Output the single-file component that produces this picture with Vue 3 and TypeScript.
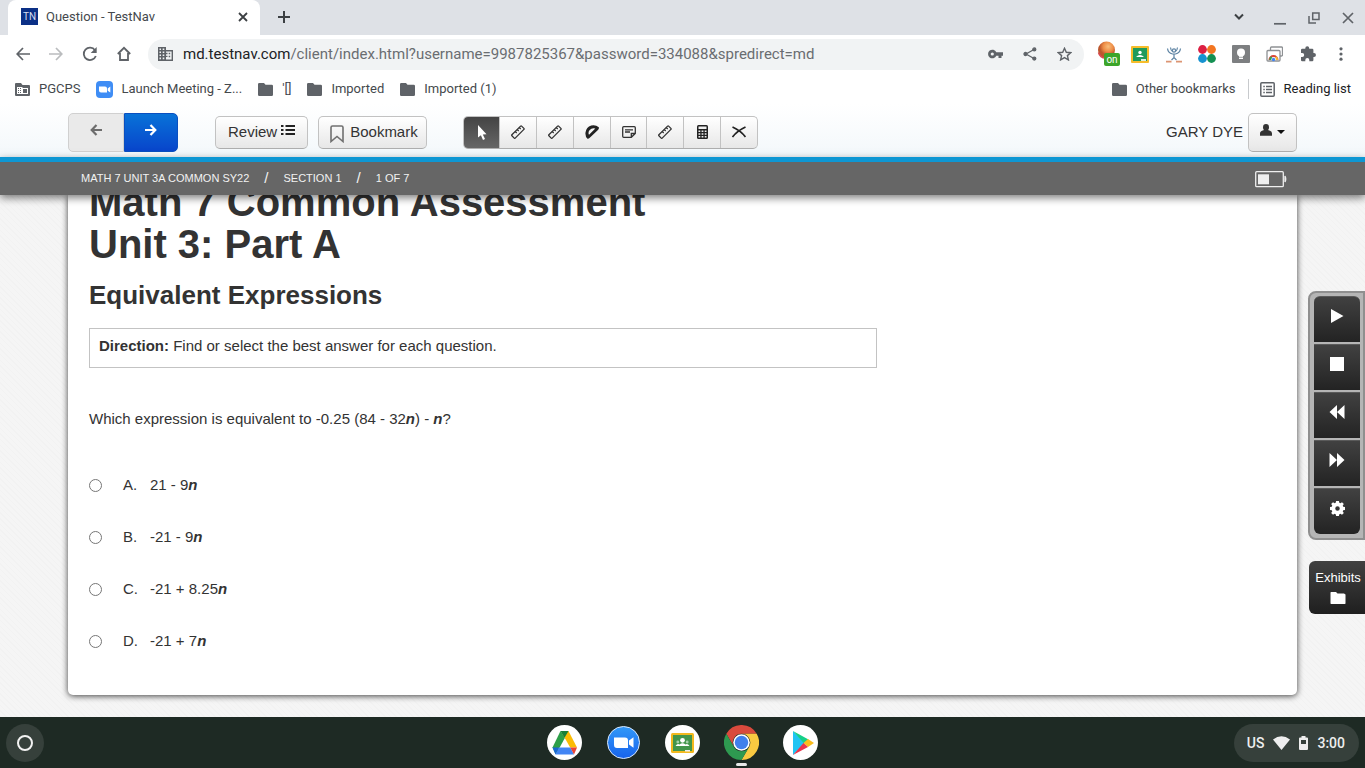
<script setup lang="ts">
import { ref } from 'vue'

interface Choice {
  letter: string
  value: string
}

const url = ref('/client/index.html?username=9987825367&password=334088&spredirect=md')
const choices: Choice[] = [
  { letter: 'A', value: '21 - 9' },
  { letter: 'B', value: '-21 - 9' },
  { letter: 'C', value: '-21 + 8.25' },
  { letter: 'D', value: '-21 + 7' },
]
const picked = ref('')

const tools = ['pointer', 'ruler', 'ruler', 'protractor', 'note', 'ruler', 'calculator', 'eliminate']
const activeTool = ref(0)
</script>

<template>
  <div class="screen">
    <header class="tabstrip">
      <div class="tab">
        <span class="favicon">TN</span>
        <span class="tab-title">Question - TestNav</span>
        <button class="plain" aria-label="Close tab">
          <svg width="10" height="10" viewBox="0 0 10 10" stroke="#3c4043" stroke-width="1.8"><path d="M1 1l8 8M9 1l-8 8" /></svg>
        </button>
      </div>
      <button class="plain new-tab" aria-label="New tab">
        <svg width="14" height="14" viewBox="0 0 14 14" stroke="#3c4043" stroke-width="2"><path d="M7 1v12M1 7h12" /></svg>
      </button>
      <div class="window-controls">
        <button class="plain" aria-label="Search tabs">
          <svg width="10" height="8" viewBox="0 0 10 8" fill="none" stroke="#3c4043" stroke-width="2"><path d="M1 1.500l4 4 4-4" /></svg>
        </button>
        <button class="plain" aria-label="Minimize">
          <svg width="12" height="14" viewBox="0 0 12 14" stroke="#5f6368" stroke-width="1.700"><path d="M0 12.800h12" /></svg>
        </button>
        <button class="plain" aria-label="Restore">
          <svg width="12" height="12" viewBox="0 0 12 12" fill="none" stroke="#5f6368" stroke-width="1.500"><path d="M4.700 1h6.300v6.500h-6.300zM1 4v7h7" /></svg>
        </button>
        <button class="plain" aria-label="Close window">
          <svg width="12" height="12" viewBox="0 0 12 12" stroke="#5f6368" stroke-width="1.700"><path d="M1 1l10 10M11 1L1 11" /></svg>
        </button>
      </div>
    </header>

    <div class="toolbar">
      <div class="nav-icons">
        <button class="plain" aria-label="Back">
          <svg width="14" height="14" viewBox="0 0 14 14" fill="none" stroke="#5f6368" stroke-width="1.700"><path d="M14 7H1.500M7 1L1.200 7 7 13" /></svg>
        </button>
        <button class="plain" aria-label="Forward">
          <svg width="14" height="14" viewBox="0 0 14 14" fill="none" stroke="#babcbe" stroke-width="1.700"><path d="M0 7h12.500M7 1l5.800 6L7 13" /></svg>
        </button>
        <button class="plain" aria-label="Reload">
          <svg width="16" height="16" viewBox="0 0 16 16" fill="none" stroke="#5f6368" stroke-width="1.800"><path d="M13.800 10A6.200 6.200 0 1 1 13 4.200" /><path d="M14.700 1v6H8.700z" fill="#5f6368" stroke="none" /></svg>
        </button>
        <button class="plain" aria-label="Home">
          <svg width="14" height="16" viewBox="0 0 14 16" fill="none" stroke="#5f6368" stroke-width="1.800"><path d="M.800 8L7 1.800 13.200 8M3 7v7h8V7" /></svg>
        </button>
      </div>
      <div class="omnibox">
        <svg width="15" height="14" viewBox="0 0 15 14" fill="#5f6368"><path fill-rule="evenodd" d="M0 0h8v3h7v11H0zM1.500 1.500v1.500H3V1.500zm3.200 0v1.500h1.600V1.500zM1.500 4.500V6H3V4.500zm3.200 0V6h1.600V4.500zM1.500 7.500V9H3V7.500zm3.200 0V9h1.600V7.500zM1.500 10.600v1.600H3v-1.600zm3.200 0v1.600h1.600v-1.600zM8 4.400v1.400h1.500v1.400H8v1.500h1.500v1.400H8v2.400h5.600V4.400zM10.700 5.800h1.500v1.400h-1.500zm0 3h1.500v1.400h-1.500z" /></svg>
        <span class="address"><span class="host">md.testnav.com</span>{{ url }}</span>
        <button class="plain" aria-label="Saved password">
          <svg width="15" height="10" viewBox="0 0 15 10"><path d="M8.300 3.300a4.300 4.300 0 1 0 0 3.400H10.500V9h3V6.700H15V3.300z" fill="#5f6368" /><circle cx="4.300" cy="5" r="1.600" fill="#f1f3f4" /></svg>
        </button>
        <button class="plain" aria-label="Share">
          <svg width="14" height="14" viewBox="0 0 14 14" fill="#5f6368" stroke="#5f6368" stroke-width="1.300"><path d="M11 2.500L3 7l8 4.500" fill="none" /><circle cx="11.300" cy="2.400" r="1.500" /><circle cx="2.500" cy="7" r="1.500" /><circle cx="11.300" cy="11.600" r="1.500" /></svg>
        </button>
        <button class="plain" aria-label="Bookmark this tab">
          <svg width="15" height="14" viewBox="0 0 15 14" fill="none" stroke="#5f6368" stroke-width="1.400"><path d="M7.500 1.300l1.800 4 4.400.400-3.300 2.900 1 4.300-3.900-2.300-3.900 2.300 1-4.300L1.300 5.700l4.400-.400z" /></svg>
        </button>
      </div>
      <div class="extensions">
        <button class="plain globe" aria-label="Globe extension">
          <svg width="24" height="28" viewBox="0 -2 24 28"><defs><radialGradient id="globe" cx=".6" cy=".3"><stop offset="0" stop-color="#f8be7c" /><stop offset=".6" stop-color="#ed8c45" /><stop offset="1" stop-color="#bb562d" /></radialGradient></defs><circle cx="9.500" cy="8" r="8.500" fill="url(#globe)" /><path d="M1.500 10.500q1.500 5.500 7 5.500" stroke="#d94a51" stroke-width="1.500" fill="none" /><rect x="7" y="11" width="16" height="13" rx="2" fill="#3ca52a" /><text x="15" y="21" text-anchor="middle" fill="#fff" font-family="Roboto, sans-serif" font-size="10">on</text></svg>
        </button>
        <button class="plain" aria-label="Share to Classroom">
          <svg width="18" height="17" viewBox="0 0 18 17"><rect width="18" height="17" rx="1" fill="#f6bd2b" /><rect x="2" y="2" width="14" height="13" fill="#219b5a" /><circle cx="9" cy="6.500" r="1.700" fill="#fff" /><path d="M5 11q4-4 8 0z" fill="#fff" /><path d="M10 13h5v2h-5z" fill="#d9efe2" /></svg>
        </button>
        <button class="plain" aria-label="Reading helper">
          <svg width="16" height="17" viewBox="0 0 16 17" fill="none" stroke="#5d83a3" stroke-width="1.200"><path d="M1.500 2.500Q2 7 6.500 8h3q4.500-1 5-5.500M4.500 1.500q.3 3 2 4M11.500 1.500q-.3 3-2 4M8 8v3.500M5.500 14L8 11.500l2.500 2.500" /><circle cx="8" cy="4.500" r="1.600" /><path d="M0 15.700h5.500M10 15.700h6" stroke="#dc9573" stroke-width="1.700" /></svg>
        </button>
        <button class="plain" aria-label="Four dots">
          <svg width="18" height="18" viewBox="0 0 18 18"><circle cx="4.500" cy="4.500" r="4.400" fill="#dc1f43" /><circle cx="13.500" cy="4.500" r="4.400" fill="#f37521" /><circle cx="4.500" cy="13.500" r="4.400" fill="#1692d0" /><circle cx="13.500" cy="13.500" r="4.400" fill="#149052" /></svg>
        </button>
        <button class="plain" aria-label="Keep">
          <svg width="18" height="18" viewBox="0 0 18 18"><rect width="18" height="18" rx="1" fill="#7d7f81" /><circle cx="9" cy="7.500" r="4" fill="#fff" /><path d="M7 11h4v3H7z" fill="#fff" /><path d="M7 12.300h4" stroke="#7d7f81" stroke-width=".700" /></svg>
        </button>
        <button class="plain" aria-label="Remote desktop">
          <svg width="17" height="16" viewBox="0 0 17 16" fill="#fff" stroke="#8e9194" stroke-width="1.300"><rect x="4.500" y="1" width="12" height="9" rx="1" /><rect x="1" y="4.500" width="13" height="10.500" rx="1" /><g fill="none" stroke-width="2"><path d="M3.500 14a4 4 0 0 1 8 0" stroke="#db4437" /><path d="M4.200 14q0-2 1.500-3" stroke="#31a455" /><path d="M11 14q0-2-1.300-3" stroke="#f4bf35" /></g><circle cx="7.500" cy="13.500" r="1.700" fill="#4285f4" stroke="none" /></svg>
        </button>
        <button class="plain" aria-label="Extensions">
          <svg width="16" height="16" viewBox="0 0 16 16" fill="#5f6368"><path d="M1 4q0-1.300 1.300-1.300h3V2.200a1.900 1.900 0 0 1 3.900 0v.5h3q1.200 0 1.200 1.300v3h.600a1.900 1.900 0 0 1 0 3.900h-.600v3.200q0 1.200-1.200 1.200H9.300V14a2 2 0 0 0-4 0v1.300H2.200Q1 15.300 1 14v-3h1.200a2 2 0 0 0 0-4H1z" /></svg>
        </button>
        <button class="plain" aria-label="Menu">
          <svg width="4" height="14" viewBox="0 0 4 14" fill="#5f6368"><circle cx="2" cy="1.800" r="1.600" /><circle cx="2" cy="7" r="1.600" /><circle cx="2" cy="12.200" r="1.600" /></svg>
        </button>
      </div>
    </div>

    <nav class="bookmarks" aria-label="Bookmarks">
      <a href="#" class="bm">
        <svg width="15" height="13" viewBox="0 0 15 13" fill="#5f6368"><path fill-rule="evenodd" d="M1 0h5l1.500 2H14q1 0 1 1v9q0 1-1 1H1q-1 0-1-1V1q0-1 1-1zM2 4v7h11V5H7.500V4z" /><path d="M3 5h1v1H3zm2 0h1v1H5zM3 7h1v1H3zm2 0h1v1H5zM3 9h1v1H3zm2 0h1v1H5zm3-3h4v4H8z" /></svg>
        PGCPS
      </a>
      <a href="#" class="bm zoom-bm">
        <svg width="17" height="17" viewBox="0 0 17 17"><rect width="17" height="17" rx="4" fill="#3f8df5" /><path d="M3 5.500h6q2 0 2 2V11.500H5q-2 0-2-2zM11.700 7.500L14.300 5.500v6L11.700 9.700z" fill="#fff" /></svg>
        Launch Meeting - Z...
      </a>
      <a v-for="name in [`'[]`, 'Imported', 'Imported (1)']" :key="name" href="#" class="bm">
        <svg width="15" height="13" viewBox="0 0 15 13" fill="#5f6368"><path d="M1.300 0h4.700l1.500 1.700h6.200q1.300 0 1.300 1.300v8.700q0 1.300-1.300 1.300H1.300Q0 13 0 11.700V1.300Q0 0 1.300 0z" /></svg>
        {{ name }}
      </a>
      <a href="#" class="bm other">
        <svg width="15" height="13" viewBox="0 0 15 13" fill="#5f6368"><path d="M1.300 0h4.700l1.500 1.700h6.200q1.300 0 1.300 1.300v8.700q0 1.300-1.300 1.300H1.300Q0 13 0 11.700V1.300Q0 0 1.300 0z" /></svg>
        Other bookmarks
      </a>
      <button class="plain bm reading">
        <svg width="15" height="15" viewBox="0 0 15 15" fill="none" stroke="#5f6368" stroke-width="1.500"><rect x=".8" y=".8" width="13.400" height="13.400" rx="1" /><path d="M3.300 4.500h1.500M6 4.500h6M3.300 7.500h1.500M6 7.500h6M3.300 10.500h1.500M6 10.500h6" /></svg>
        Reading list
      </button>
    </nav>

    <div class="testbar">
      <div class="pager">
        <button class="prev" aria-label="Previous question" disabled>
          <svg width="12" height="12" viewBox="0 0 12 12" fill="none" stroke="#6d6d6d" stroke-width="2.200"><path d="M12 6H2M6.500 1L1.700 6l4.800 5" /></svg>
        </button>
        <button class="next" aria-label="Next question">
          <svg width="12" height="12" viewBox="0 0 12 12" fill="none" stroke="#fff" stroke-width="2.200"><path d="M0 6h10M5.500 1l4.800 5-4.800 5" /></svg>
        </button>
      </div>
      <button class="btn review">
        Review
        <svg width="14" height="12" viewBox="0 0 14 12" stroke="#222" stroke-width="2"><path d="M4.500 2H14M4.500 6H14M4.500 10H14" /><path d="M0 2h2.500M0 6h2.500M0 10h2.500" /></svg>
      </button>
      <button class="btn mark">
        <svg width="14" height="18" viewBox="0 0 14 18" fill="none" stroke="#707070" stroke-width="1.600"><path d="M1 2.500Q1 1 2.500 1h9Q13 1 13 2.500V16.500L7 11.500 1 16.500z" /></svg>
        Bookmark
      </button>
      <div class="tools">
        <button
          v-for="(tool, i) in tools"
          :key="i"
          :class="{ active: activeTool === i }"
          :aria-label="tool"
          @click="activeTool = i"
        >
          <svg v-if="tool === 'pointer'" width="10" height="15" viewBox="0 0 10 15" fill="#fff"><path d="M1 0l8.500 9.300-3.700.2 2.200 4.500-2 .900-2.100-4.600L1 12.500z" /></svg>
          <svg v-else-if="tool === 'ruler'" width="14" height="14" viewBox="0 0 14 14" fill="none" stroke="#333" stroke-width="1.300"><path d="M.9 9.800L9.600 1.100q.5-.500 1 0l2.300 2.300q.5.500 0 1L4.200 13.100q-.5.500-1 0L.9 10.800q-.5-.500 0-1z" /><path d="M4.200 6.500l1.500 1.500M6.200 4.500l1.500 1.500M8.200 2.500l1.500 1.500" /></svg>
          <svg v-else-if="tool === 'protractor'" width="14" height="14" viewBox="0 0 14 14" fill="#222"><path fill-rule="evenodd" d="M13.800 2.300Q10.500-.500 6.200.600 1.300 2 .5 7.500q-.5 4 2 6.200 1 .300 2-.7l8.700-8.300q1.100-1.200.600-2.400zM10.300 3.500L4 9.800Q2.800 7.500 4.500 5.200 7 2.300 10.300 3.500z" /></svg>
          <svg v-else-if="tool === 'note'" width="14" height="12" viewBox="0 0 14 12" fill="none" stroke="#333" stroke-width="1.300"><path d="M.7 1.700q0-1 1-1h10.600q1 0 1 1V7.500l-4 3.800H1.700q-1 0-1-1zM13.300 7.500H9.300v3.800M3 3.800h8M3 6h5" /></svg>
          <svg v-else-if="tool === 'calculator'" width="11" height="14" viewBox="0 0 11 14"><rect width="11" height="14" rx="1.500" fill="#222" /><path d="M1.500 1.500h8v2.500h-8zM1.500 5.500h1.800V7H1.500zm3.100 0h1.800V7H4.600zm3.100 0h1.800V7H7.700zM1.500 8.200h1.800v1.500H1.500zm3.100 0h1.800v1.500H4.600zm3.100 0h1.800v1.500H7.700zM1.500 11h1.800v1.500H1.500zm3.100 0h1.800v1.500H4.600zm3.100 0h1.800v1.500H7.700z" fill="#eee" /></svg>
          <svg v-else width="14" height="12" viewBox="0 0 14 12" fill="none" stroke="#222" stroke-width="1.700"><path d="M.5 1q8 3.500 13 10M13.500 1Q5 5 .5 11" /></svg>
        </button>
      </div>
      <span class="user-name">GARY DYE</span>
      <button class="user" aria-label="User menu">
        <svg width="12" height="12" viewBox="0 0 12 12" fill="#333"><ellipse cx="6" cy="3.300" rx="3" ry="3.300" /><path d="M0 11.700V9.500Q0 7 3.500 6.300L4.500 5h3l1 1.300Q12 7 12 9.500v2.200z" /></svg>
        <span class="caret"></span>
      </button>
    </div>

    <div class="crumbs">
      <span>MATH 7 UNIT 3A COMMON SY22</span><span class="sep">/</span><span>SECTION 1</span><span class="sep">/</span><span>1 OF 7</span>
      <svg class="battery" width="32" height="17" viewBox="0 0 32 17" fill="none" stroke="#eee" stroke-width="1.300"><rect x=".7" y=".7" width="27.600" height="15" rx="1" /><path d="M3 3.300h11v10H3z" fill="#eee" stroke="none" /><path d="M30 5q1.500 3 0 6z" fill="#eee" /></svg>
    </div>

    <main class="stage">
      <article class="paper">
        <h1>Math 7 Common Assessment<br />Unit 3: Part A</h1>
        <h2>Equivalent Expressions</h2>
        <p class="direction"><strong>Direction:</strong> Find or select the best answer for each question.</p>
        <p class="question">Which expression is equivalent to -0.25 (84 - 32<b><i>n</i></b>) - <b><i>n</i></b>?</p>
        <div class="choices" role="radiogroup" aria-label="Answers">
          <label v-for="c in choices" :key="c.letter" class="choice">
            <input v-model="picked" type="radio" name="answer" :value="c.letter" />
            <span class="letter">{{ c.letter }}.</span>
            <span>{{ c.value }}<b><i>n</i></b></span>
          </label>
        </div>
      </article>

      <aside class="side">
        <div class="player">
          <button aria-label="Play"><svg width="14" height="14" viewBox="0 0 14 14"><path d="M1 0l12.500 7L1 14z" /></svg></button>
          <button aria-label="Stop"><svg width="14" height="14" viewBox="0 0 14 14"><path d="M0 0h14v14H0z" /></svg></button>
          <button aria-label="Rewind"><svg width="16" height="14" viewBox="0 0 16 14"><path d="M8 0v14L.500 7zM15.500 0v14L8 7z" /></svg></button>
          <button aria-label="Fast forward"><svg width="16" height="14" viewBox="0 0 16 14"><path d="M.500 0v14L8 7zM8 0v14l7.500-7z" /></svg></button>
          <button aria-label="Settings"><svg width="15" height="15" viewBox="0 0 14 14"><path fill-rule="evenodd" d="M5.700 0h2.600l.4 1.700 1 .4L11.200 1.100 12.900 2.800l-1 1.500.4 1L14 5.700v2.600l-1.700.4-.4 1 1 1.500-1.700 1.700-1.500-1-1 .4L8.300 14H5.700l-.4-1.700-1-.4-1.500 1L1.100 11.200l1-1.500-.4-1L0 8.300V5.700l1.700-.4.4-1L1.100 2.800 2.800 1.100l1.500 1 1-.4zM7 4.900a2.100 2.100 0 1 0 0 4.200 2.100 2.100 0 0 0 0-4.200z" /></svg></button>
        </div>
        <button class="exhibits">
          Exhibits
          <svg width="16" height="12" viewBox="0 0 16 12"><path d="M1 0h5l1.500 1.500H14l1.500 1v9l-.5.500H1l-.5-.5V.5z" /></svg>
        </button>
      </aside>
    </main>

    <footer class="shelf">
      <button class="launcher" aria-label="Launcher"><span></span></button>
      <div class="apps">
        <button class="plain" aria-label="Drive">
          <svg width="35" height="35" viewBox="0 0 35 35"><circle cx="17.500" cy="17.500" r="17.500" fill="#fff" /><path d="M13.500 6L18 12.700 11 25.500 8.500 29 5.500 22.500z" fill="#2d9f49" /><path d="M21.500 6L30 22.500H23.200L15.200 8.500z" fill="#fbbc04" /><path d="M13.500 6h8L17.500 12.700z" fill="#188038" /><path d="M11.700 22.500h11.600L27 29.500H8.500z" fill="#4285f4" /><path d="M23.200 22.500H30L27 29.500z" fill="#ea4335" /><path d="M5.500 22.500h6.200L8.500 29.500z" fill="#1967d2" /></svg>
        </button>
        <button class="plain" aria-label="Zoom">
          <svg width="35" height="35" viewBox="0 0 35 35"><defs><linearGradient id="zm" x2="0" y2="1"><stop offset="0" stop-color="#3299f8" /><stop offset="1" stop-color="#1763ed" /></linearGradient></defs><circle cx="17.500" cy="17.500" r="16" fill="url(#zm)" stroke="#dbeafe" /><path d="M8 12.500h11q3 0 3 3V23H11q-3 0-3-3zM23 15.500l4.500-3.200v10.500L23 19.500z" fill="#fff" /></svg>
        </button>
        <button class="plain" aria-label="Classroom">
          <svg width="35" height="35" viewBox="0 0 35 35"><circle cx="17.500" cy="17.500" r="17.500" fill="#fff" /><rect x="6" y="8" width="23" height="20" rx="1.500" fill="#f2b91f" /><rect x="8" y="10" width="19" height="16" fill="#43964b" /><circle cx="17.500" cy="15.300" r="2.400" fill="#fff" /><circle cx="12.800" cy="17" r="1.400" fill="#a5d0a9" /><circle cx="22.200" cy="17" r="1.400" fill="#a5d0a9" /><path d="M10.500 21q2-3 4-1.500 3-2.500 6 0 2-1.500 4 1.500z" fill="#fff" /><path d="M20 25h5v1.500h-5z" fill="#eee" /></svg>
        </button>
        <button class="plain running" aria-label="Chrome">
          <svg width="35" height="35" viewBox="0 0 35 35"><path d="M2.340 8.750A17.500 17.500 0 0 1 32.660 8.750H17.500A8.750 8.750 0 0 0 9.920 21.880z" fill="#d94a3d" /><path d="M32.660 8.750A17.500 17.500 0 0 1 17.500 35L25.080 21.880A8.750 8.750 0 0 0 17.500 8.750z" fill="#f9c941" /><path d="M17.500 35A17.500 17.500 0 0 1 2.340 8.750L9.920 21.880A8.750 8.750 0 0 0 25.080 21.880z" fill="#2e9950" /><circle cx="17.500" cy="17.500" r="8.300" fill="#fff" /><circle cx="17.500" cy="17.500" r="6.700" fill="#4080ec" /></svg>
        </button>
        <button class="plain" aria-label="Play Store">
          <svg width="35" height="35" viewBox="0 0 35 35"><circle cx="17.500" cy="17.500" r="17.500" fill="#fff" /><path d="M10 6v24L21.500 18z" fill="#20c4f3" /><path d="M10 6L25.500 14.500 21 18.500z" fill="#15d088" /><path d="M25 14l6 4-6 4-4.500-4z" fill="#fbbc1c" /><path d="M10 30L20.500 18 25 22z" fill="#e9344c" /></svg>
        </button>
      </div>
      <button class="status">
        <span>US</span>
        <svg width="17" height="14" viewBox="0 0 17 14" fill="#eee"><path d="M8.500 14L0 3.500Q8.500-3 17 3.500z" /></svg>
        <svg width="9" height="14" viewBox="0 0 9 14"><path d="M2.500 0h4v1.500H8q1 0 1 1V13q0 1-1 1H1q-1 0-1-1V2.500q0-1 1-1h1.500z" fill="#eee" /><path d="M2 4h5v4H2z" fill="#36403b" /></svg>
        <span>3:00</span>
      </button>
    </footer>
  </div>
</template>

<style>
body {
  margin: 0;
}
</style>

<style scoped>
.screen {
  display: flex;
  flex-direction: column;
  height: 100vh;
  min-height: 700px;
  overflow: hidden;
  background: #fff;
  color: #333;
  font-family: "Liberation Sans", Arial, sans-serif;
  font-size: 15px;
  line-height: 20px;
}
button {
  box-sizing: border-box;
  margin: 0;
  font: inherit;
  color: inherit;
}
svg {
  display: block;
  flex: none;
}
.plain {
  display: flex;
  align-items: center;
  justify-content: center;
  padding: 0;
  border: 0;
  background: none;
}

.tabstrip {
  display: flex;
  align-items: center;
  height: 35px;
  flex: none;
  padding: 0 11px 0 8px;
  background: #dee1e6;
  font-family: Roboto, sans-serif;
}
.tab {
  display: flex;
  align-items: center;
  box-sizing: border-box;
  width: 252px;
  height: 35px;
  padding: 0 12px 2px 13px;
  border-radius: 8px 8px 0 0;
  background: #fff;
}
.favicon {
  width: 17px;
  height: 17px;
  background: #0b3086;
  color: #d5dcf0;
  font-size: 10px;
  line-height: 17px;
  text-align: center;
}
.tab-title {
  flex: 1;
  margin-left: 8px;
  font-size: 13px;
  color: #45494d;
}
.new-tab {
  margin-left: 17px;
  padding-bottom: 2px;
}
.window-controls {
  display: flex;
  align-items: center;
  gap: 22px;
  margin-left: auto;
}
.window-controls .plain:first-child {
  margin-right: 8px;
  padding-bottom: 2px;
}

.toolbar {
  display: flex;
  align-items: center;
  height: 39px;
  flex: none;
  padding: 0 7px 0 16px;
}
.nav-icons {
  display: flex;
  gap: 19px;
  margin-right: 17px;
  padding-bottom: 2px;
}
.omnibox {
  display: flex;
  align-items: center;
  flex: 1;
  min-width: 0;
  box-sizing: border-box;
  height: 31px;
  padding: 0 12px 2px 10px;
  gap: 20px;
  border-radius: 16px;
  background: #f1f3f4;
}
.omnibox > svg {
  margin-right: -10px;
}
.address {
  flex: 1;
  overflow: hidden;
  white-space: nowrap;
  font-family: Roboto, sans-serif;
  font-size: 15px;
  color: #6a6d71;
}
.host {
  color: #202124;
}
.extensions {
  display: grid;
  grid-template-columns: repeat(8, 1fr);
  align-items: center;
  width: 268px;
  height: 28px;
  margin-left: 6px;
  padding-bottom: 1px;
}
.globe {
  padding-left: 4px;
}

.bookmarks {
  display: flex;
  align-items: center;
  height: 30px;
  flex: none;
  gap: 16px;
  padding: 0 14px 0 15px;
  font-family: Roboto, sans-serif;
  font-size: 13px;
}
.bm {
  display: flex;
  align-items: center;
  gap: 9px;
  color: #45494d;
  text-decoration: none;
  white-space: nowrap;
}
.zoom-bm {
  gap: 8px;
}
.other {
  margin-left: auto;
  margin-right: -4px;
}
.reading {
  padding-left: 11px;
  border-left: 1px solid #c8cacd;
  color: #202124;
}

.testbar {
  display: flex;
  align-items: center;
  height: 53px;
  flex: none;
  padding: 3px 68px 0;
  box-sizing: border-box;
  background: linear-gradient(#fff, #f3f8fb);
}
.pager {
  display: flex;
  margin-right: 37px;
}
.pager button {
  display: flex;
  align-items: center;
  justify-content: center;
  width: 54px;
  height: 39px;
  padding: 0 0 4px;
  border: 1px solid #d0d0d0;
}
.pager .prev {
  width: 56px;
  border-radius: 5px 0 0 5px;
  background: #eaeaea;
}
.pager .next {
  border-color: #0a4fc0;
  border-radius: 0 5px 5px 0;
  background: linear-gradient(#0872d8, #0845cb);
}
.btn,
.tools,
.user {
  display: flex;
  border: 1px solid #c2c2c2;
  border-bottom-color: #aeaeae;
  border-radius: 5px;
  background: linear-gradient(#fff, #e7e7e7);
}
.btn {
  height: 33px;
  gap: 4px;
  padding: 5px 12px 6px;
  white-space: nowrap;
}
.review svg {
  margin-top: 2px;
}
.mark {
  align-items: center;
  gap: 6px;
  margin: 0 36px 0 10px;
  padding: 3px 8px 3px 11px;
}
.mark svg {
  margin-top: 3px;
}
.tools {
  box-sizing: border-box;
  height: 33px;
  width: 295px;
  overflow: hidden;
}
.tools button {
  display: flex;
  align-items: center;
  justify-content: center;
  flex: 1;
  padding: 0;
  border: 0;
  border-left: 1px solid #c2c2c2;
  background: none;
}
.tools button:first-child {
  border-left: 0;
}
.tools .active {
  background: linear-gradient(#444, #666);
}
.user-name {
  margin-left: auto;
}
.user {
  align-items: center;
  justify-content: center;
  gap: 5px;
  width: 49px;
  height: 39px;
  margin-left: 5px;
  padding: 0 0 4px;
}
.caret {
  margin-top: 4px;
  border: 4px solid transparent;
  border-top-color: #111;
  border-bottom: 0;
}

.crumbs {
  position: relative;
  z-index: 1;
  display: flex;
  align-items: center;
  height: 31px;
  flex: none;
  padding: 0 78px 2px 81px;
  border-top: 5px solid #0e97d3;
  background: #666;
  box-shadow: 0 3px 8px rgba(0, 0, 0, 0.5);
  color: #f2f2f2;
  font-size: 12px;
}
.crumbs {
  font-size: 11px;
}
.sep {
  margin: 0 15px;
  font-size: 15px;
}
.battery {
  margin-left: auto;
  margin-top: 4px;
}

.stage {
  display: flex;
  flex: 1;
  min-height: 0;
  overflow: hidden;
  padding: 0 0 22px 68px;
  background-color: #f5f5f5;
  background-image: repeating-linear-gradient(45deg, #f2f2f2 0 1px, transparent 1px 4px);
}
.paper {
  flex: 1;
  min-width: 0;
  padding: 0 21px;
  border-radius: 0 0 5px 5px;
  background: #fff;
  box-shadow: 0 1px 6px rgba(0, 0, 0, 0.75);
}
h1 {
  margin: -14px 0 0;
  font-size: 40px;
  line-height: 42px;
}
h2 {
  margin: 17px 0 20px;
  font-size: 26px;
  line-height: 26px;
}
p {
  margin: 0;
}
.direction {
  max-width: 768px;
  padding: 7px 9px 11px;
  border: 1px solid #c3c3c3;
}
.question {
  margin: 41px 0 46px;
}
.choices {
  display: flex;
  flex-direction: column;
  align-items: flex-start;
  gap: 32px;
}
.choice {
  display: flex;
  align-items: center;
}
.choice input {
  width: 13px;
  height: 13px;
  margin: 0 21px 0 0;
}
.letter {
  width: 27px;
}

.side {
  display: flex;
  flex-direction: column;
  width: 57px;
  margin-left: 11px;
  padding-top: 96px;
  flex: none;
  color: #fff;
}
.player {
  display: flex;
  flex-direction: column;
  gap: 2px;
  padding: 3px 3px 4px 4px;
  border: 2px solid #8f8f8f;
  border-radius: 8px 0 0 8px;
  background: #b5b5b5;
}
.player button {
  display: flex;
  align-items: center;
  justify-content: center;
  height: 46px;
  padding: 0 0 7px;
  border: 0;
  border-top: 1px solid #5a5a5a;
  background: linear-gradient(#414141, #232323);
}
.player button:first-child {
  border-radius: 6px 6px 0 0;
}
.player button:last-child {
  border-radius: 0 0 6px 6px;
}
.side svg {
  fill: #fff;
}
.exhibits {
  display: flex;
  flex-direction: column;
  align-items: center;
  gap: 4px;
  height: 53px;
  margin: 21px 0 0 1px;
  padding: 7px 0 0 2px;
  border: 0;
  border-radius: 6px 0 0 6px;
  background: linear-gradient(#414141, #1f1f1f);
  font-size: 13px;
}

.shelf {
  display: grid;
  grid-template-columns: 1fr auto 1fr;
  align-items: center;
  height: 51px;
  flex: none;
  padding: 0 6px;
  background: #1e2a24;
}
.launcher {
  display: flex;
  align-items: center;
  justify-content: center;
  width: 38px;
  height: 38px;
  padding: 0;
  border: 0;
  border-radius: 50%;
  background: #36403b;
}
.launcher span {
  width: 12px;
  height: 12px;
  border: 2px solid #f2f2f2;
  border-radius: 50%;
}
.apps {
  display: flex;
  gap: 24px;
}
.running {
  position: relative;
}
.running::after {
  content: "";
  position: absolute;
  left: 12px;
  bottom: -6px;
  width: 11px;
  height: 3px;
  border-radius: 2px;
  background: #e8e8e8;
}
.status {
  display: flex;
  align-items: center;
  justify-self: end;
  gap: 9px;
  height: 38px;
  padding: 0 14px 0 13px;
  border: 0;
  border-radius: 19px;
  background: #36403b;
  color: #eee;
  font-family: Roboto, sans-serif;
  font-size: 14px;
  font-weight: 500;
}
</style>
